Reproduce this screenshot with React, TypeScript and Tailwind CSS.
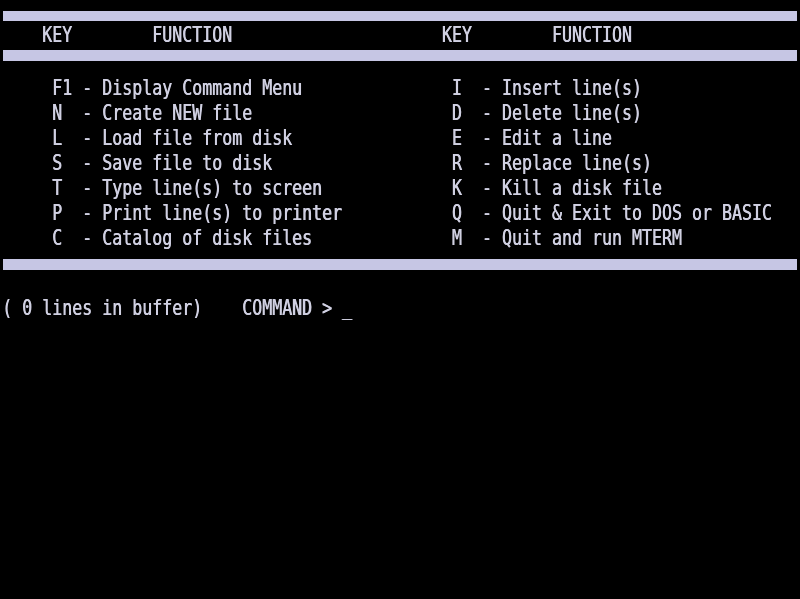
import React from "react";

const pad = (s: string, n: number) => (s.length >= n ? s : s + " ".repeat(n - s.length));

const left: [string, string][] = [
  ["F1", "Display Command Menu"],
  ["N", "Create NEW file"],
  ["L", "Load file from disk"],
  ["S", "Save file to disk"],
  ["T", "Type line(s) to screen"],
  ["P", "Print line(s) to printer"],
  ["C", "Catalog of disk files"],
];
const right: [string, string][] = [
  ["I", "Insert line(s)"],
  ["D", "Delete line(s)"],
  ["E", "Edit a line"],
  ["R", "Replace line(s)"],
  ["K", "Kill a disk file"],
  ["Q", "Quit & Exit to DOS or BASIC"],
  ["M", "Quit and run MTERM"],
];

const entry = ([k, d]: [string, string]) => pad(k, 3) + "- " + d;

const lines = left.map((l, i) => pad("     " + entry(l), 45) + entry(right[i]));
const header = pad(pad("    KEY", 15) + "FUNCTION", 44) + pad("KEY", 11) + "FUNCTION";

function Line({ text }: { text: string }) {
  return (
    <div className="h-[25px] leading-[25px] whitespace-pre overflow-visible">
      <span className="inline-block translate-y-[1px] origin-left scale-x-[0.7906] text-[21px] leading-[25px] text-[#d0d0e2] [font-family:'DejaVu_Sans_Mono',monospace] [text-shadow:0.7px_0_0_#d0d0e2] blur-[0.35px]">
        {text}
      </span>
    </div>
  );
}

export default function App() {
  return (
    <div className="w-[800px] h-[599px] bg-black overflow-hidden pt-[11px] pl-[2px] flex flex-col">
      <div className="h-[10px] mx-[1px] mr-[3px] bg-[#c6c6e4] blur-[0.4px]" />
      <div className="mt-[1px]">
        <Line text={header} />
      </div>
      <div className="mt-[3px] h-[11px] mx-[1px] mr-[3px] bg-[#c6c6e4] blur-[0.4px]" />
      <div className="mt-[14px] flex flex-col">
        {lines.map((t, i) => (
          <Line key={i} text={t} />
        ))}
      </div>
      <div className="mt-[9px] h-[11px] mx-[1px] mr-[3px] bg-[#c6c6e4] blur-[0.4px]" />
      <div className="mt-[25px]">
        <Line text="( 0 lines in buffer)    COMMAND > _" />
      </div>
    </div>
  );
}
